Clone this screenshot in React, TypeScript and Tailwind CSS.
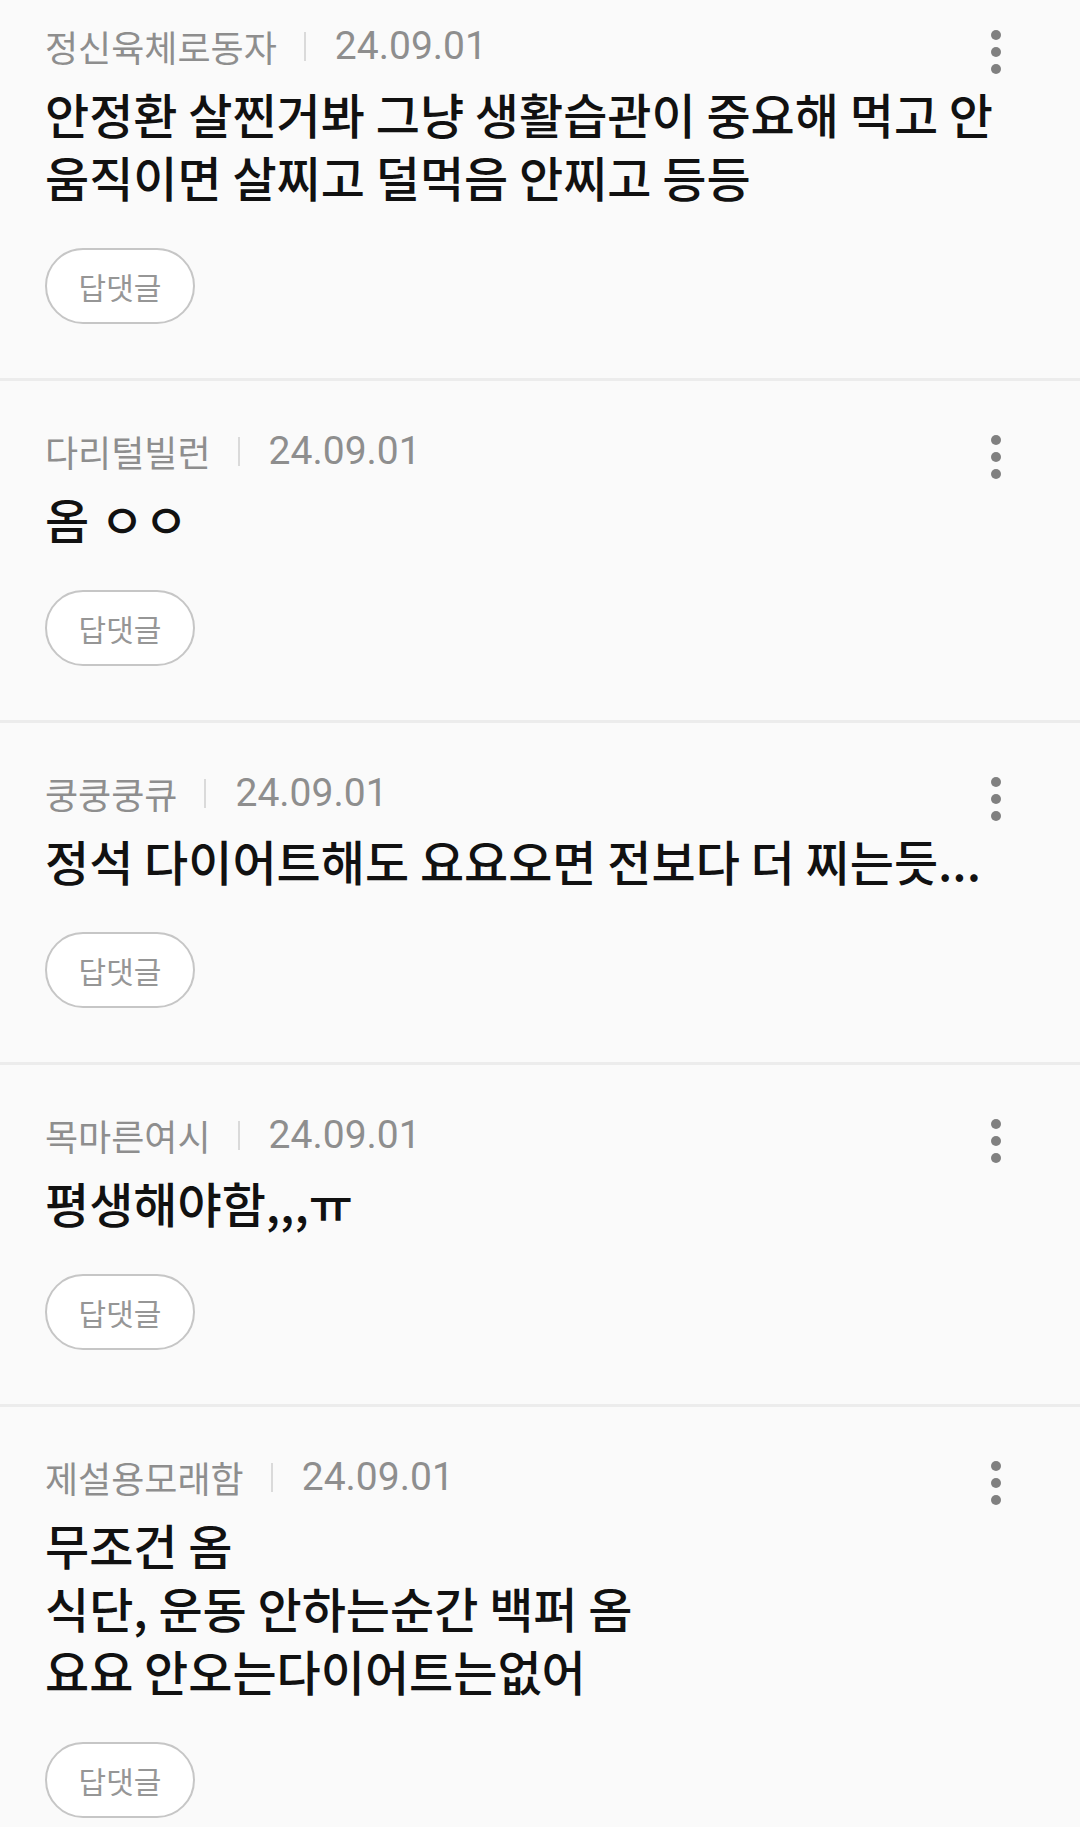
const comments = [
  {
    name: '정신육체로동자',
    date: '24.09.01',
    lines: ['안정환 살찐거봐 그냥 생활습관이 중요해 먹고 안 움직이면 살찌고 덜먹음 안찌고 등등'],
  },
  { name: '다리털빌런', date: '24.09.01', lines: ['옴 ㅇㅇ'] },
  { name: '쿵쿵쿵큐', date: '24.09.01', lines: ['정석 다이어트해도 요요오면 전보다 더 찌는듯...'] },
  { name: '목마른여시', date: '24.09.01', lines: ['평생해야함,,,ㅠ'] },
  {
    name: '제설용모래함',
    date: '24.09.01',
    lines: ['무조건 옴', '식단, 운동 안하는순간 백퍼 옴', '요요 안오는다이어트는없어'],
  },
];

function MoreDots() {
  return (
    <div className="mr-[79px] mt-[8px] flex flex-col items-center gap-[7px] self-start">
      <span className="block h-[10px] w-[10px] rounded-full bg-[#808080]" />
      <span className="block h-[10px] w-[10px] rounded-full bg-[#808080]" />
      <span className="block h-[10px] w-[10px] rounded-full bg-[#808080]" />
    </div>
  );
}

function Comment({
  name,
  date,
  lines,
  first,
}: {
  name: string;
  date: string;
  lines: string[];
  first: boolean;
}) {
  return (
    <section
      className={`pl-[45px] pr-0 pb-[54px] ${
        first ? 'pt-[22px]' : 'pt-[46px] border-t-[3px] border-[#ececec]'
      }`}
    >
      {/* meta row */}
      <div className="flex h-[48px] items-center justify-between">
        <div className="flex items-center">
          <span className="text-[36px] leading-[48px] text-[#8e8e8e] [font-family:'Noto_Sans_CJK_KR',sans-serif]">
            {name}
          </span>
          <span className="ml-[27px] mr-[29px] block h-[29px] w-[2px] bg-[#dadada]" />
          <span className="text-[39px] leading-[48px] text-[#8e8e8e] [font-family:Roboto,'Noto_Sans_CJK_KR',sans-serif]">
            {date}
          </span>
        </div>
        <MoreDots />
      </div>

      {/* body */}
      <div className="mt-[12px] pr-[45px] text-[48px] font-medium leading-[63px] text-[#111111] [font-family:'Noto_Sans_CJK_KR',sans-serif]">
        {lines.map((l, i) => (
          <p key={i}>{l}</p>
        ))}
      </div>

      {/* reply button */}
      <button className="mt-[40px] flex h-[76px] w-[150px] items-center justify-center rounded-full border-2 border-[#c6c6c6] bg-white text-[30px] text-[#969696] [font-family:'Noto_Sans_CJK_KR',sans-serif]">
        답댓글
      </button>
    </section>
  );
}

export default function App() {
  return (
    <div className="h-[1827px] w-[1080px] overflow-hidden bg-[#fafafa]">
      {comments.map((c, i) => (
        <Comment key={i} {...c} first={i === 0} />
      ))}
    </div>
  );
}
